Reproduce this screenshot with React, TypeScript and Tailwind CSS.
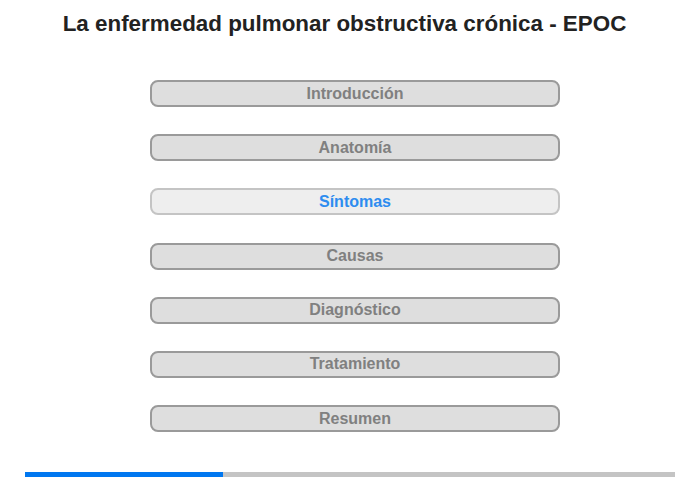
import React from 'react';

const sections = ['Introducción', 'Anatomía', 'Síntomas', 'Causas', 'Diagnóstico', 'Tratamiento', 'Resumen'];

const App = () => {
  const active = 2;

  return (
    <div className="w-[700px] h-[480px] bg-white font-['Liberation_Sans',Arial,sans-serif]">
      <h1 className="pt-[10px] pr-[11px] text-center text-[22.4px] leading-[28px] font-bold text-[#222]">
        La enfermedad pulmonar obstructiva crónica - EPOC
      </h1>

      <nav className="mt-[42px] pl-[10px] flex flex-col items-center gap-[27.2px]">
        {sections.map((s, i) => (
          <div
            key={s}
            className={
              i === active
                ? 'w-[410px] h-[27px] rounded-[8px] border-2 border-[#c4c4c4] bg-[#eeeeee] flex items-center justify-center text-[16px] font-bold text-[#2d8cf0]'
                : 'w-[410px] h-[27px] rounded-[8px] border-2 border-[#9a9a9a] bg-[#dedede] flex items-center justify-center text-[16px] font-bold text-[#808080]'
            }
          >
            {s}
          </div>
        ))}
      </nav>

      {/* progress */}
      <div className="mt-[40px] mx-[25px] h-[5px] flex bg-[#c4c4c4]">
        <div className="w-[198px] bg-[#0077f0]" />
      </div>
    </div>
  );
};

export default App;
